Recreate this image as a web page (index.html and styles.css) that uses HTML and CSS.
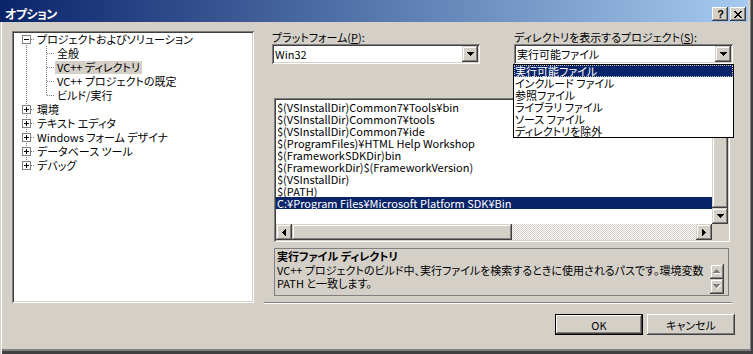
FILE: index.html
```html
<!DOCTYPE html>
<html lang="ja">
<head>
  <meta charset="UTF-8" />
  <title>オプション</title>
  <link rel="stylesheet" href="styles.css">
</head>
<body>
  <div class="window">
    <div class="titlebar">
      <span class="title">オプション</span>
      <div class="caption-btns">
        <span class="cap-btn help">?</span>
        <span class="cap-btn close">
          <svg width="8" height="7" viewBox="0 0 8 7" shape-rendering="crispEdges">
            <rect x="0" y="0" width="2" height="1"/><rect x="6" y="0" width="2" height="1"/>
            <rect x="1" y="1" width="2" height="1"/><rect x="5" y="1" width="2" height="1"/>
            <rect x="2" y="2" width="4" height="1"/>
            <rect x="3" y="3" width="2" height="1"/>
            <rect x="2" y="4" width="4" height="1"/>
            <rect x="1" y="5" width="2" height="1"/><rect x="5" y="5" width="2" height="1"/>
            <rect x="0" y="6" width="2" height="1"/><rect x="6" y="6" width="2" height="1"/>
          </svg>
        </span>
      </div>
    </div>

    <div class="content">
      <div class="tree-box">
        <ul class="tree">
          <li>
            <div class="row"><span class="exp-col"><span class="exp minus"></span></span><span class="label">プロジェクトおよびソリューション</span></div>
            <ul class="children">
              <li class="row"><span class="stub"></span><span class="label">全般</span></li>
              <li class="row"><span class="stub"></span><span class="label sel">VC++ ディレクトリ</span></li>
              <li class="row"><span class="stub"></span><span class="label">VC++ プロジェクトの既定</span></li>
              <li class="row"><span class="stub"></span><span class="label">ビルド/実行</span></li>
            </ul>
          </li>
          <li class="row"><span class="exp-col"><span class="exp plus"></span></span><span class="label">環境</span></li>
          <li class="row"><span class="exp-col"><span class="exp plus"></span></span><span class="label">テキスト エディタ</span></li>
          <li class="row"><span class="exp-col"><span class="exp plus"></span></span><span class="label">Windows フォーム デザイナ</span></li>
          <li class="row"><span class="exp-col"><span class="exp plus"></span></span><span class="label">データベース ツール</span></li>
          <li class="row"><span class="exp-col"><span class="exp plus"></span></span><span class="label">デバッグ</span></li>
        </ul>
      </div>

      <div class="page">
        <div class="fields">
          <div class="field platform">
            <div class="field-label">プラットフォーム(<u>P</u>):</div>
            <div class="combo">
              <span class="combo-text">Win32</span>
              <span class="combo-btn">
                <svg width="7" height="4" viewBox="0 0 7 4" shape-rendering="crispEdges"><path d="M0 0h7v1h-1v1h-1v1h-1v1h-1v-1h-1v-1h-1v-1h-1z"/></svg>
              </span>
            </div>
          </div>
          <div class="field project">
            <div class="field-label">ディレクトリを表示するプロジェクト(<u>S</u>):</div>
            <div class="combo">
              <span class="combo-text">実行可能ファイル</span>
              <span class="combo-btn">
                <svg width="7" height="4" viewBox="0 0 7 4" shape-rendering="crispEdges"><path d="M0 0h7v1h-1v1h-1v1h-1v1h-1v-1h-1v-1h-1v-1h-1z"/></svg>
              </span>
            </div>
            <ul class="dropdown">
              <li class="selected">実行可能ファイル</li>
              <li>インクルード ファイル</li>
              <li>参照ファイル</li>
              <li>ライブラリ ファイル</li>
              <li>ソース ファイル</li>
              <li>ディレクトリを除外</li>
            </ul>
          </div>
        </div>

        <div class="listbox">
          <ul class="dir-list">
            <li>$(VSInstallDir)Common7¥Tools¥bin</li>
            <li>$(VSInstallDir)Common7¥tools</li>
            <li>$(VSInstallDir)Common7¥ide</li>
            <li>$(ProgramFiles)¥HTML Help Workshop</li>
            <li>$(FrameworkSDKDir)bin</li>
            <li>$(FrameworkDir)$(FrameworkVersion)</li>
            <li>$(VSInstallDir)</li>
            <li>$(PATH)</li>
            <li class="selected">C:¥Program Files¥Microsoft Platform SDK¥Bin</li>
          </ul>
          <div class="vscroll">
            <span class="sb-btn">
              <svg width="7" height="4" viewBox="0 0 7 4" shape-rendering="crispEdges"><path d="M3 0h1v1h1v1h1v1h1v1h-7v-1h1v-1h1v-1h1z"/></svg>
            </span>
            <span class="sb-thumb"></span>
            <span class="sb-btn">
              <svg width="7" height="4" viewBox="0 0 7 4" shape-rendering="crispEdges"><path d="M0 0h7v1h-1v1h-1v1h-1v1h-1v-1h-1v-1h-1v-1h-1z"/></svg>
            </span>
          </div>
          <div class="hscroll">
            <span class="sb-btn">
              <svg width="4" height="7" viewBox="0 0 4 7" shape-rendering="crispEdges"><path d="M3 0h1v7h-1v-1h-1v-1h-1v-1h-1v-1h1v-1h1v-1h1z"/></svg>
            </span>
            <span class="sb-thumb h-thumb"></span>
            <span class="sb-track"></span>
            <span class="sb-btn">
              <svg width="4" height="7" viewBox="0 0 4 7" shape-rendering="crispEdges"><path d="M0 0h1v1h1v1h1v1h1v1h-1v1h-1v1h-1v1h-1z"/></svg>
            </span>
          </div>
          <div class="corner"></div>
        </div>

        <div class="desc">
          <div class="desc-title">実行ファイル ディレクトリ</div>
          <div class="desc-text">VC++ プロジェクトのビルド中、実行ファイルを検索するときに使用されるパスです。環境変数<br>PATH と一致します。</div>
          <div class="desc-scroll">
            <span class="mini-btn">
              <svg width="8" height="5" viewBox="0 0 8 5" shape-rendering="crispEdges">
                <path fill="#fff" d="M4 1h1v1h1v1h1v1h1v1h-7v-1h1v-1h1v-1h1z"/>
                <path fill="#808080" d="M3 0h1v1h1v1h1v1h1v1h-7v-1h1v-1h1v-1h1z"/>
              </svg>
            </span>
            <span class="mini-btn">
              <svg width="8" height="5" viewBox="0 0 8 5" shape-rendering="crispEdges">
                <path fill="#fff" d="M1 1h7v1h-1v1h-1v1h-1v1h-1v-1h-1v-1h-1v-1h-1z"/>
                <path fill="#808080" d="M0 0h7v1h-1v1h-1v1h-1v1h-1v-1h-1v-1h-1v-1h-1z"/>
              </svg>
            </span>
          </div>
        </div>

        <div class="sep"></div>

        <div class="buttons">
          <button class="btn default">OK</button>
          <button class="btn">キャンセル</button>
        </div>
      </div>
    </div>
  </div>
</body>
</html>
```

FILE: styles.css
```css
* {
  box-sizing: border-box;
}
body {
  margin: 0;
  background: #d4d0c8;
  font-family: "Noto Sans CJK JP", sans-serif;
  font-size: 11px;
  color: #000;
  font-feature-settings: "palt";
}
ul {
  list-style: none;
  margin: 0;
  padding: 0;
}
svg {
  display: block;
}

/* window frame */
.window {
  width: 753px;
  height: 354px;
  background: #d4d0c8;
  box-shadow: inset 1px 0 #d4d0c8, inset 2px 0 #fff,
    inset -2px -3px #404040, inset -3px -5px #808080;
  display: flex;
  flex-direction: column;
  overflow: hidden;
}
.titlebar {
  height: 22px;
  margin-right: 5px;
  padding: 6px 2px 0 5px;
  background: linear-gradient(to right, #0a246a, #a6caf0);
  display: flex;
  align-items: center;
  justify-content: space-between;
}
.title {
  color: #fff;
  font-weight: bold;
  font-size: 12px;
  letter-spacing: -0.5px;
  line-height: 14px;
}
.caption-btns {
  display: flex;
  gap: 2px;
}
.cap-btn {
  width: 16px;
  height: 14px;
  background: #d4d0c8;
  box-shadow: inset -1px -1px #404040, inset 1px 1px #fff,
    inset -2px -2px #808080, inset 2px 2px #d4d0c8;
  display: flex;
  align-items: center;
  justify-content: center;
}
.cap-btn.help {
  font-family: "Liberation Sans", sans-serif;
  font-weight: bold;
  font-size: 11px;
  line-height: 14px;
  padding-left: 1px;
}

.content {
  flex: 1;
  display: flex;
  gap: 18px;
  padding: 9px 0 0 12px;
}

/* tree */
.tree-box {
  width: 242px;
  height: 272px;
  flex: none;
  background: #fff;
  padding: 1px 2px 2px;
  box-shadow: inset 1px 1px #808080, inset -1px -1px #fff,
    inset 2px 2px #404040, inset -2px -2px #d4d0c8;
}
.tree {
  padding-left: 3px;
  background: repeating-linear-gradient(to bottom, #808080 0 1px, transparent 1px 2px) no-repeat;
  background-position: 12px 7px;
  background-size: 1px calc(100% - 14px);
}
.row {
  display: flex;
  align-items: center;
  height: 14px;
}
.exp-col,
.stub {
  width: 18px;
  height: 14px;
  flex: none;
  display: flex;
  align-items: center;
  background: repeating-linear-gradient(to right, #808080 0 1px, transparent 1px 2px) no-repeat;
  background-position: 10px 7px;
  background-size: 8px 1px;
}
.exp {
  width: 9px;
  height: 9px;
  margin-left: 5px;
  margin-top: 1px;
  border: 1px solid #808080;
}
.exp.minus {
  background: linear-gradient(#000, #000) center / 5px 1px no-repeat, #fff;
}
.exp.plus {
  background: linear-gradient(#000, #000) center / 5px 1px no-repeat,
    linear-gradient(#000, #000) center / 1px 5px no-repeat, #fff;
}
.label {
  padding: 0 2px;
  line-height: 13px;
  white-space: nowrap;
}
.label.sel {
  background: #d4d0c8;
}
.children {
  margin-left: 20px;
  background: repeating-linear-gradient(to bottom, #808080 0 1px, transparent 1px 2px) no-repeat;
  background-position: 9px 0;
  background-size: 1px calc(100% - 7px);
}

/* right page */
.page {
  width: 463px;
  display: flex;
  flex-direction: column;
}
.fields {
  display: flex;
  gap: 34px;
}
.field {
  position: relative;
}
.field.platform {
  width: 208px;
}
.field.project {
  width: 219px;
}
.field-label {
  height: 13px;
  line-height: 13px;
  white-space: nowrap;
}
.combo {
  height: 20px;
  padding: 2px;
  display: flex;
  background: #fff;
  box-shadow: inset 1px 1px #808080, inset -1px -1px #fff,
    inset 2px 2px #404040, inset -2px -2px #d4d0c8;
}
.combo-text {
  flex: 1;
  line-height: 16px;
  padding-left: 1px;
  white-space: nowrap;
}
.combo-btn,
.sb-btn {
  width: 16px;
  height: 16px;
  flex: none;
  background: #d4d0c8;
  box-shadow: inset -1px -1px #404040, inset 1px 1px #d4d0c8,
    inset -2px -2px #808080, inset 2px 2px #fff;
  display: flex;
  align-items: center;
  justify-content: center;
}
.dropdown {
  position: absolute;
  top: 100%;
  left: -1px;
  width: 221px;
  background: #fff;
  border: 1px solid #000;
  z-index: 2;
}
.dropdown li {
  height: 12px;
  line-height: 12px;
  padding-left: 1px;
  white-space: nowrap;
}
.dropdown li.selected {
  background: #0a246a;
  color: #fff;
  outline: 1px dotted #c8c8c8;
  outline-offset: -1px;
}

/* directory list */
.listbox {
  margin: 34px 0 0 2px;
  width: 456px;
  height: 144px;
  padding: 2px;
  background: #fff;
  box-shadow: inset 1px 1px #808080, inset -1px -1px #fff,
    inset 2px 2px #404040, inset -2px -2px #d4d0c8;
  display: grid;
  grid-template-columns: minmax(0, 1fr) 16px;
  grid-template-rows: 1fr 16px;
}
.dir-list {
  padding-top: 1px;
  overflow: hidden;
}
.dir-list li {
  height: 12px;
  line-height: 12px;
  padding-left: 1px;
  white-space: nowrap;
}
.dir-list li.selected {
  background: #0a246a;
  color: #fff;
}
.vscroll {
  display: flex;
  flex-direction: column;
  background: #d4d0c8;
}
.sb-thumb {
  flex: 1;
  background: #d4d0c8;
  box-shadow: inset -1px -1px #404040, inset 1px 1px #d4d0c8,
    inset -2px -2px #808080, inset 2px 2px #fff;
}
.hscroll {
  display: flex;
}
.h-thumb {
  flex: none;
  width: 220px;
}
.sb-track {
  flex: 1;
  background: repeating-conic-gradient(#fff 0 25%, #d4d0c8 0 50%) 0 0 / 2px 2px;
}
.corner {
  background: #d4d0c8;
}

/* description */
.desc {
  margin: 6px 0 0 2px;
  width: 455px;
  height: 48px;
  border: 1px solid #808080;
  padding: 1px 4px 0 2px;
  display: grid;
  grid-template-columns: minmax(0, 1fr) 14px;
}
.desc-title {
  grid-column: 1 / -1;
  font-weight: bold;
  line-height: 13px;
}
.desc-text {
  line-height: 13px;
  white-space: nowrap;
}
.desc-scroll {
  display: flex;
  flex-direction: column;
}
.mini-btn {
  width: 14px;
  height: 15px;
  background: #d4d0c8;
  box-shadow: inset -1px -1px #404040, inset 1px 1px #d4d0c8,
    inset -2px -2px #808080, inset 2px 2px #fff;
  display: flex;
  align-items: center;
  justify-content: center;
}

.sep {
  margin: 6px 3px 0 -8px;
  height: 2px;
  border-top: 1px solid #808080;
  border-bottom: 1px solid #fff;
}

.buttons {
  margin-top: 10px;
  display: flex;
  justify-content: flex-end;
  gap: 4px;
}
.btn {
  width: 88px;
  height: 21px;
  padding: 0;
  border: none;
  background: #d4d0c8;
  font: inherit;
  color: #000;
  box-shadow: inset -1px -1px #404040, inset 1px 1px #fff,
    inset -2px -2px #808080, inset 2px 2px #d4d0c8;
}
.btn.default {
  box-shadow: inset 0 0 0 1px #000, inset -2px -2px #404040, inset 2px 2px #fff,
    inset -3px -3px #808080;
}
```
